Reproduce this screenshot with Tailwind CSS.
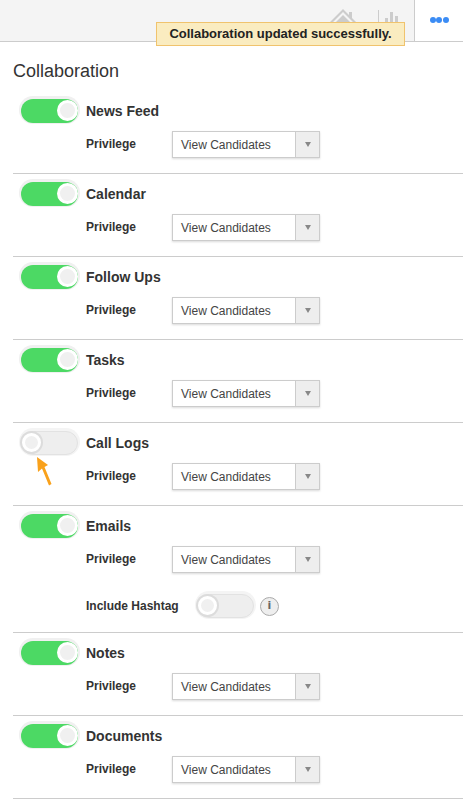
<!DOCTYPE html>
<html lang="en">
<head>
    <meta charset="UTF-8">
    <script src="https://cdn.jsdelivr.net/npm/@tailwindcss/browser@4"></script>
    <title>Collaboration</title>
</head>
<body class="bg-white h-[799px] overflow-hidden relative font-['Liberation_Sans',Arial,sans-serif] text-[#333]">
    <!-- Top bar -->
    <div class="h-[42px] bg-[#f4f4f4] border-b border-[#ccc] flex justify-end">
        <div class="flex items-end gap-[22px] mr-[16px]">
            <svg class="w-[26px] h-[32px]" viewBox="0 0 26 32" fill="#ccc">
                <path d="M13 0 L0 13 L2 14 L13 3 L24 14 L26 13 L22 9 V3 H19 V6 Z"/>
                <path d="M4 15 L13 6 L22 15 V32 H4 Z"/>
            </svg>
            <svg class="w-[20px] h-[31px]" viewBox="0 0 20 31" fill="#ccc">
                <rect x="0" y="0" width="1" height="31"/>
                <rect x="7" y="8" width="3" height="23"/>
                <rect x="12" y="2" width="3" height="29"/>
                <rect x="17" y="6" width="3" height="25"/>
            </svg>
        </div>
        <div class="w-[49px] h-[42px] bg-white border-l border-b border-[#ccc] flex items-center justify-center gap-[0.5px] pb-[2px]">
            <span class="w-[6px] h-[6px] rounded-full bg-[#3b8cf5]"></span>
            <span class="w-[6px] h-[6px] rounded-full bg-[#3b8cf5]"></span>
            <span class="w-[6px] h-[6px] rounded-full bg-[#3b8cf5]"></span>
        </div>
    </div>

    <!-- Toast -->
    <div class="absolute left-[156px] top-[22px] w-[249px] h-[24px] bg-[#faecc0] border border-[#f0c36d] text-[13px] font-bold text-[#222] flex items-center justify-center">Collaboration updated successfully.</div>

    <h1 class="text-[18px] leading-[20px] text-[#333] ml-[13px] pt-[19px] pb-[10px]">Collaboration</h1>

    <div id="list" class="ml-[13px]">
        <!-- News Feed -->
        <section class="h-[83px] pt-[8px] border-b border-[#ccc]">
            <div class="flex items-center h-[24px] pl-[8px]">
                <span class="w-[57px] h-[24px] rounded-full bg-[#4cd964] shadow-[0_-1px_0_2px_#f0f0f0] relative shrink-0"><span class="absolute right-0 top-[1px] w-[21px] h-[21px] rounded-full bg-[#f0f0f0] border-[3px] border-white"></span></span>
                <span class="ml-[8px] text-[14px] font-bold">News Feed</span>
            </div>
            <div class="flex items-center ml-[73px] mt-[8px]">
                <span class="w-[86px] text-[12px] font-bold -mt-[2px]">Privilege</span>
                <div class="w-[148px] h-[27px] flex border border-[#ccc] shadow-[0_1px_2px_rgba(0,0,0,0.15)] text-[12px] text-[#444]"><span class="flex-1 flex items-center pl-[8px]">View Candidates</span><span class="w-[24px] bg-[#eee] border-l border-[#ccc] flex items-center justify-center"><span class="border-x-[3.5px] border-x-transparent border-t-[5px] border-t-[#888]"></span></span></div>
            </div>
        </section>
        <!-- Calendar -->
        <section class="h-[83px] pt-[8px] border-b border-[#ccc]">
            <div class="flex items-center h-[24px] pl-[8px]">
                <span class="w-[57px] h-[24px] rounded-full bg-[#4cd964] shadow-[0_-1px_0_2px_#f0f0f0] relative shrink-0"><span class="absolute right-0 top-[1px] w-[21px] h-[21px] rounded-full bg-[#f0f0f0] border-[3px] border-white"></span></span>
                <span class="ml-[8px] text-[14px] font-bold">Calendar</span>
            </div>
            <div class="flex items-center ml-[73px] mt-[8px]">
                <span class="w-[86px] text-[12px] font-bold -mt-[2px]">Privilege</span>
                <div class="w-[148px] h-[27px] flex border border-[#ccc] shadow-[0_1px_2px_rgba(0,0,0,0.15)] text-[12px] text-[#444]"><span class="flex-1 flex items-center pl-[8px]">View Candidates</span><span class="w-[24px] bg-[#eee] border-l border-[#ccc] flex items-center justify-center"><span class="border-x-[3.5px] border-x-transparent border-t-[5px] border-t-[#888]"></span></span></div>
            </div>
        </section>
        <!-- Follow Ups -->
        <section class="h-[83px] pt-[8px] border-b border-[#ccc]">
            <div class="flex items-center h-[24px] pl-[8px]">
                <span class="w-[57px] h-[24px] rounded-full bg-[#4cd964] shadow-[0_-1px_0_2px_#f0f0f0] relative shrink-0"><span class="absolute right-0 top-[1px] w-[21px] h-[21px] rounded-full bg-[#f0f0f0] border-[3px] border-white"></span></span>
                <span class="ml-[8px] text-[14px] font-bold">Follow Ups</span>
            </div>
            <div class="flex items-center ml-[73px] mt-[8px]">
                <span class="w-[86px] text-[12px] font-bold -mt-[2px]">Privilege</span>
                <div class="w-[148px] h-[27px] flex border border-[#ccc] shadow-[0_1px_2px_rgba(0,0,0,0.15)] text-[12px] text-[#444]"><span class="flex-1 flex items-center pl-[8px]">View Candidates</span><span class="w-[24px] bg-[#eee] border-l border-[#ccc] flex items-center justify-center"><span class="border-x-[3.5px] border-x-transparent border-t-[5px] border-t-[#888]"></span></span></div>
            </div>
        </section>
        <!-- Tasks -->
        <section class="h-[83px] pt-[8px] border-b border-[#ccc]">
            <div class="flex items-center h-[24px] pl-[8px]">
                <span class="w-[57px] h-[24px] rounded-full bg-[#4cd964] shadow-[0_-1px_0_2px_#f0f0f0] relative shrink-0"><span class="absolute right-0 top-[1px] w-[21px] h-[21px] rounded-full bg-[#f0f0f0] border-[3px] border-white"></span></span>
                <span class="ml-[8px] text-[14px] font-bold">Tasks</span>
            </div>
            <div class="flex items-center ml-[73px] mt-[8px]">
                <span class="w-[86px] text-[12px] font-bold -mt-[2px]">Privilege</span>
                <div class="w-[148px] h-[27px] flex border border-[#ccc] shadow-[0_1px_2px_rgba(0,0,0,0.15)] text-[12px] text-[#444]"><span class="flex-1 flex items-center pl-[8px]">View Candidates</span><span class="w-[24px] bg-[#eee] border-l border-[#ccc] flex items-center justify-center"><span class="border-x-[3.5px] border-x-transparent border-t-[5px] border-t-[#888]"></span></span></div>
            </div>
        </section>
        <!-- Call Logs -->
        <section class="h-[83px] pt-[8px] border-b border-[#ccc] relative">
            <div class="flex items-center h-[24px] pl-[8px]">
                <span class="w-[57px] h-[24px] rounded-full bg-[#eee] border border-[#e2e2e2] shadow-[0_-1px_0_2px_#f4f4f4] relative shrink-0"><span class="absolute left-0 top-[1px] w-[19px] h-[19px] rounded-full bg-[#f0f0f0] border-[3px] border-white shadow-[0_0_0_2px_#dcdcdc]"></span></span>
                <span class="ml-[8px] text-[14px] font-bold">Call Logs</span>
            </div>
            <div class="flex items-center ml-[73px] mt-[8px]">
                <span class="w-[86px] text-[12px] font-bold -mt-[2px]">Privilege</span>
                <div class="w-[148px] h-[27px] flex border border-[#ccc] shadow-[0_1px_2px_rgba(0,0,0,0.15)] text-[12px] text-[#444]"><span class="flex-1 flex items-center pl-[8px]">View Candidates</span><span class="w-[24px] bg-[#eee] border-l border-[#ccc] flex items-center justify-center"><span class="border-x-[3.5px] border-x-transparent border-t-[5px] border-t-[#888]"></span></span></div>
            </div>
            <!-- Annotation arrow -->
            <svg class="absolute left-[23px] top-[33px] w-[18px] h-[30px]" viewBox="0 0 18 30" fill="#f9a11b">
                <path d="M1 1 L12 9 L8.500 11 L15.500 28 L13 29.500 L6 12.500 L2 16 Z"/>
            </svg>
        </section>
        <!-- Emails -->
        <section class="h-[127px] pt-[8px] border-b border-[#ccc]">
            <div class="flex items-center h-[24px] pl-[8px]">
                <span class="w-[57px] h-[24px] rounded-full bg-[#4cd964] shadow-[0_-1px_0_2px_#f0f0f0] relative shrink-0"><span class="absolute right-0 top-[1px] w-[21px] h-[21px] rounded-full bg-[#f0f0f0] border-[3px] border-white"></span></span>
                <span class="ml-[8px] text-[14px] font-bold">Emails</span>
            </div>
            <div class="flex items-center ml-[73px] mt-[8px]">
                <span class="w-[86px] text-[12px] font-bold -mt-[2px]">Privilege</span>
                <div class="w-[148px] h-[27px] flex border border-[#ccc] shadow-[0_1px_2px_rgba(0,0,0,0.15)] text-[12px] text-[#444]"><span class="flex-1 flex items-center pl-[8px]">View Candidates</span><span class="w-[24px] bg-[#eee] border-l border-[#ccc] flex items-center justify-center"><span class="border-x-[3.5px] border-x-transparent border-t-[5px] border-t-[#888]"></span></span></div>
            </div>
            <div class="flex items-center ml-[73px] mt-[21px] h-[24px]">
                <span class="w-[111px] text-[12px] font-bold shrink-0">Include Hashtag</span>
                <span class="w-[57px] h-[24px] rounded-full bg-[#eee] border border-[#e2e2e2] shadow-[0_-1px_0_2px_#f4f4f4] relative shrink-0"><span class="absolute left-0 top-[1px] w-[19px] h-[19px] rounded-full bg-[#f0f0f0] border-[3px] border-white shadow-[0_0_0_2px_#dcdcdc]"></span></span>
                <span class="ml-[6px] w-[19px] h-[19px] rounded-full bg-[#eee] border border-[#aaa] text-[#666] text-[11px] font-bold font-['DejaVu_Sans',sans-serif] flex items-center justify-center">i</span>
            </div>
        </section>
        <!-- Notes -->
        <section class="h-[83px] pt-[8px] border-b border-[#ccc]">
            <div class="flex items-center h-[24px] pl-[8px]">
                <span class="w-[57px] h-[24px] rounded-full bg-[#4cd964] shadow-[0_-1px_0_2px_#f0f0f0] relative shrink-0"><span class="absolute right-0 top-[1px] w-[21px] h-[21px] rounded-full bg-[#f0f0f0] border-[3px] border-white"></span></span>
                <span class="ml-[8px] text-[14px] font-bold">Notes</span>
            </div>
            <div class="flex items-center ml-[73px] mt-[8px]">
                <span class="w-[86px] text-[12px] font-bold -mt-[2px]">Privilege</span>
                <div class="w-[148px] h-[27px] flex border border-[#ccc] shadow-[0_1px_2px_rgba(0,0,0,0.15)] text-[12px] text-[#444]"><span class="flex-1 flex items-center pl-[8px]">View Candidates</span><span class="w-[24px] bg-[#eee] border-l border-[#ccc] flex items-center justify-center"><span class="border-x-[3.5px] border-x-transparent border-t-[5px] border-t-[#888]"></span></span></div>
            </div>
        </section>
        <!-- Documents -->
        <section class="h-[83px] pt-[8px] border-b border-[#ccc]">
            <div class="flex items-center h-[24px] pl-[8px]">
                <span class="w-[57px] h-[24px] rounded-full bg-[#4cd964] shadow-[0_-1px_0_2px_#f0f0f0] relative shrink-0"><span class="absolute right-0 top-[1px] w-[21px] h-[21px] rounded-full bg-[#f0f0f0] border-[3px] border-white"></span></span>
                <span class="ml-[8px] text-[14px] font-bold">Documents</span>
            </div>
            <div class="flex items-center ml-[73px] mt-[8px]">
                <span class="w-[86px] text-[12px] font-bold -mt-[2px]">Privilege</span>
                <div class="w-[148px] h-[27px] flex border border-[#ccc] shadow-[0_1px_2px_rgba(0,0,0,0.15)] text-[12px] text-[#444]"><span class="flex-1 flex items-center pl-[8px]">View Candidates</span><span class="w-[24px] bg-[#eee] border-l border-[#ccc] flex items-center justify-center"><span class="border-x-[3.5px] border-x-transparent border-t-[5px] border-t-[#888]"></span></span></div>
            </div>
        </section>
    </div>
</body>
</html>
